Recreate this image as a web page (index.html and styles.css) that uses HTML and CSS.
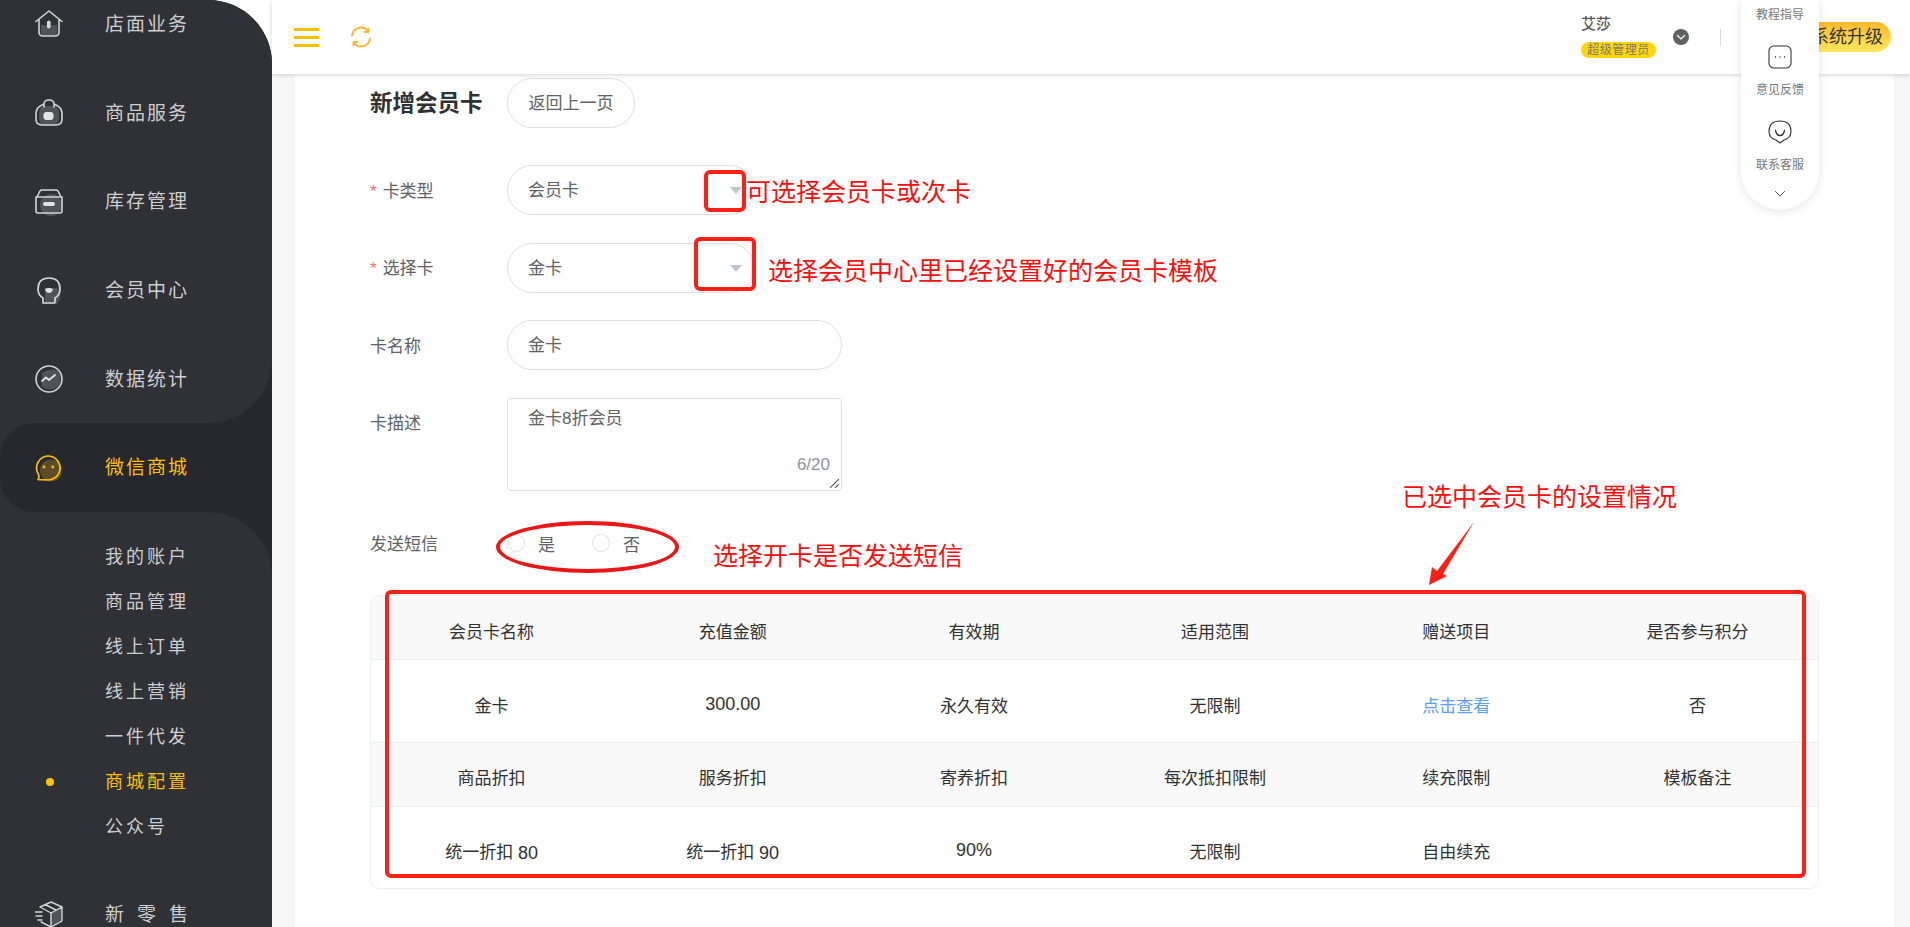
FILE: index.html
```html
<!DOCTYPE html>
<html lang="zh-CN">
  <head>
    <meta charset="UTF-8">
    <title>新增会员卡</title>
    <link rel="stylesheet" href="styles.css">
  </head>
  <body>
    <div class="app">
      <!-- Sidebar -->
      <aside class="sidebar">
        <div class="nav-top">
          <div class="nav-item nav-first">
            <svg class="nav-icon" viewBox="0 0 28 28" fill="none"><path d="M6 15h16v8q0 3-3 3H9q-3 0-3-3z" fill="#50535a"/><path d="M1 11.500 14 1l13 10.500M4 9.500V22q0 4 4 4h12q4 0 4-4V9.500" stroke="#d3d4d6" stroke-width="1.600" stroke-linecap="round" stroke-linejoin="round"/><rect x="12" y="10.500" width="3.600" height="8" rx="1.800" fill="#d9dadc"/></svg>
            <span>店面业务</span>
          </div>
          <div class="nav-item">
            <svg class="nav-icon" viewBox="0 0 28 28" fill="none"><rect x="4" y="7" width="20" height="19" rx="6" fill="#50535a"/><path d="M8 5.500Q1 8 1 15v5q0 6 6 6h14q6 0 6-6v-5q0-7-7-9.500M9 8V5q0-4 5-4t5 4v3" stroke="#d3d4d6" stroke-width="1.600" stroke-linecap="round"/><rect x="8.500" y="13" width="10" height="8" rx="3" fill="#e2e3e4"/></svg>
            <span>商品服务</span>
          </div>
          <div class="nav-item">
            <svg class="nav-icon" viewBox="0 0 28 28" fill="none"><circle cx="16" cy="17" r="11" fill="#50535a"/><path d="M2 9 5 3q.5-1 2-1h14q1.500 0 2 1l3 6H2zM1 9h26v14q0 2-2 2H3q-2 0-2-2z" stroke="#d3d4d6" stroke-width="1.600" stroke-linejoin="round"/><rect x="8" y="14" width="12" height="4" rx="2" fill="#e2e3e4"/></svg>
            <span>库存管理</span>
          </div>
          <div class="nav-item">
            <svg class="nav-icon" viewBox="0 0 28 28" fill="none"><path d="M10 11h12q5 3 3 10t-5 6H10z" fill="#50535a"/><path d="M8 26v-5Q3 18 3 12 3 1 14 1t11 11q0 6-5 9v4q0 1-1 1H8" stroke="#d3d4d6" stroke-width="1.700" stroke-linecap="round"/><path d="M10 12q4-2 8 0-1 4-4 4t-4-4" fill="#e2e3e4"/></svg>
            <span>会员中心</span>
          </div>
          <div class="nav-item">
            <svg class="nav-icon" viewBox="0 0 28 28" fill="none"><path d="M7 8q8-6 16-2 5 8 0 16-9 5-16 0z" fill="#50535a"/><circle cx="14" cy="14" r="13" stroke="#d3d4d6" stroke-width="1.600"/><path d="m7 16 4-3.500 3 2.500 6-5" stroke="#e2e3e4" stroke-width="1.800" stroke-linecap="round" stroke-linejoin="round"/></svg>
            <span>数据统计</span>
          </div>
        </div>
        <div class="nav-active-wrap">
          <div class="nav-item nav-active">
            <svg class="nav-icon" viewBox="0 0 28 28" fill="none"><circle cx="16" cy="16.500" r="11" fill="#5c4d2a"/><path d="M13 2a12 12 0 1 1-1.500 23.900C8 25.500 5 26 3 25.500 4 24 4 22 3.500 20.500A12 12 0 0 1 13 2z" stroke="#ffbf00" stroke-width="1.700" stroke-linejoin="round"/><circle cx="9" cy="13" r="1.400" fill="#ffbf00"/><circle cx="17.800" cy="13" r="1.400" fill="#ffbf00"/></svg>
            <span>微信商城</span>
          </div>
        </div>
        <div class="nav-bottom">
          <ul class="sub-nav">
            <li>我的账户</li>
            <li>商品管理</li>
            <li>线上订单</li>
            <li>线上营销</li>
            <li>一件代发</li>
            <li class="current">商城配置</li>
            <li>公众号</li>
          </ul>
          <div class="nav-item nav-wide">
            <svg class="nav-icon" viewBox="0 0 28 28" fill="none"><path d="M15 13 27 7v14l-12 6z" fill="#50535a"/><path d="m5 7 11-5 11 5v14l-11 6-10-5M5 7l11 6 11-6M16 13v14M10 4.500l11 5.500M0 12h7M1 16h6M3 20h4" stroke="#d3d4d6" stroke-width="1.400" stroke-linecap="round" stroke-linejoin="round"/></svg>
            <span>新零售</span>
          </div>
        </div>
      </aside>

      <div class="main">
        <!-- Top bar -->
        <header class="topbar">
          <div class="menu-btn"><i></i><i></i><i></i></div>
          <svg class="refresh" viewBox="0 0 22 22" fill="none" stroke="#fdb62f" stroke-width="2" stroke-linecap="round" stroke-linejoin="round"><path d="M2 9.500A9 9 0 0 1 18 5M20 12.500A9 9 0 0 1 4 17"/><path d="M14.500 6H18.500V2.500M7.500 16H3.500V19.500" stroke-width="1.800"/></svg>
          <div class="user">
            <div class="user-name">艾莎</div>
            <div class="user-role">超级管理员</div>
          </div>
          <div class="user-arrow">
            <svg viewBox="0 0 16 16" fill="none" stroke="#fff" stroke-width="1.200" stroke-linecap="round"><path d="m4.500 6.500 3.500 3.500 3.500-3.500"/></svg>
          </div>
          <div class="divider"></div>
          <div class="upgrade">系统升级</div>
        </header>

        <!-- Form card -->
        <div class="content">
          <div class="card">
            <div class="page-title">
              <h1>新增会员卡</h1>
              <div class="back-btn">返回上一页</div>
            </div>

            <div class="form-row">
              <label class="required">卡类型</label>
              <div class="field field-select">会员卡<b class="caret"></b></div>
            </div>
            <div class="form-row">
              <label class="required">选择卡</label>
              <div class="field field-select">金卡<b class="caret"></b></div>
            </div>
            <div class="form-row">
              <label>卡名称</label>
              <div class="field">金卡</div>
            </div>
            <div class="form-row form-row-area">
              <label>卡描述</label>
              <div class="area">
                金卡8折会员
                <span class="counter">6/20</span>
                <svg class="grip" viewBox="0 0 10 10" stroke="#555" stroke-width="1"><path d="M1 9 9 1M5.500 9 9 5.500"/></svg>
              </div>
            </div>
            <div class="form-row form-row-radio">
              <label>发送短信</label>
              <div class="radio"><i></i>是</div>
              <div class="radio"><i></i>否</div>
            </div>

            <table class="info-table">
              <tr class="row-head row-first">
                <td>会员卡名称</td><td>充值金额</td><td>有效期</td><td>适用范围</td><td>赠送项目</td><td>是否参与积分</td>
              </tr>
              <tr class="row-value">
                <td>金卡</td><td><span class="num">300.00</span></td><td>永久有效</td><td>无限制</td><td class="link">点击查看</td><td>否</td>
              </tr>
              <tr class="row-head">
                <td>商品折扣</td><td>服务折扣</td><td>寄养折扣</td><td>每次抵扣限制</td><td>续充限制</td><td>模板备注</td>
              </tr>
              <tr class="row-value row-last">
                <td>统一折扣 <span class="num">80</span></td><td>统一折扣 <span class="num">90</span></td><td><span class="num">90%</span></td><td>无限制</td><td>自由续充</td><td></td>
              </tr>
            </table>
          </div>
        </div>
      </div>

      <!-- Floating help panel -->
      <div class="help-panel">
        <div class="help-text help-clipped">教程指导</div>
        <svg class="help-icon" viewBox="0 0 24 24" fill="none" stroke="#333" stroke-width="1.100"><rect x="1" y="1" width="22" height="22" rx="5"/><path d="M7 12h1M11.500 12h1M16 12h1" stroke-width="1.400"/></svg>
        <div class="help-text">意见反馈</div>
        <svg class="help-icon" viewBox="0 0 24 24" fill="none" stroke="#333" stroke-width="1.100" stroke-linecap="round" stroke-linejoin="round"><path d="M12 23 8 20Q1 18 1 11.500 1 1 12 1t11 10.500Q23 18 16 20z"/><path d="M7.500 10.500q1 5 4.500 5t4.500-5" stroke-width="1.300"/></svg>
        <div class="help-text">联系客服</div>
        <svg class="help-more" viewBox="0 0 12 7" fill="none" stroke="#555" stroke-width=".9"><path d="m1 1 5 5 5-5"/></svg>
      </div>

      <!-- Red markup drawn over the screenshot -->
      <div class="mark mark-box1"></div>
      <div class="mark mark-box2"></div>
      <div class="mark mark-ellipse"></div>
      <div class="mark mark-table"></div>
      <svg class="mark-arrow" viewBox="0 0 50 70"><path d="M45 0 14 52 18 54 0 63 3 45 8 49z" fill="#ff2015"/></svg>
      <div class="note note-1">可选择会员卡或次卡</div>
      <div class="note note-2">选择会员中心里已经设置好的会员卡模板</div>
      <div class="note note-3">选择开卡是否发送短信</div>
      <div class="note note-4">已选中会员卡的设置情况</div>
    </div>
  </body>
</html>
```

FILE: styles.css
```css
/* Reset */
* {
  margin: 0;
  padding: 0;
  box-sizing: border-box;
}

html, body {
  height: 100%;
  overflow: hidden;
}

body {
  font-family: "Liberation Sans", "Noto Sans CJK SC", sans-serif;
  font-size: 17px;
  color: #606266;
}

.app {
  position: relative;
  display: flex;
  height: 927px;
  background: #fff;
  overflow: hidden;
}

/* Sidebar */
.sidebar {
  flex: 0 0 272px;
  display: flex;
  flex-direction: column;
  background: #27282d;
  border-top-right-radius: 64px;
  overflow: hidden;
  position: relative;
  z-index: 3;
  color: #cdced0;
}

.nav-top {
  height: 423px;
  background: #303136;
  border-bottom-right-radius: 64px;
}

.nav-item {
  display: flex;
  align-items: center;
  height: 88.75px;
  padding-left: 35px;
  font-size: 19px;
  letter-spacing: 2px;
}

.nav-item span {
  margin-bottom: 4px;
}

.nav-first {
  margin-top: -20px;
}

.nav-icon {
  flex: none;
  width: 28px;
  height: 28px;
  margin-right: 42px;
}

.nav-active-wrap {
  height: 89px;
  background: #303136;
}

.nav-active {
  height: 89px;
  background: #27282d;
  border-radius: 34px 0 0 34px;
  color: #ffbf00;
}

.nav-bottom {
  flex: 1;
  background: #303136;
  border-top-right-radius: 64px;
  padding-top: 23px;
}

.sub-nav {
  list-style: none;
  margin-bottom: 20px;
}

.sub-nav li {
  position: relative;
  height: 45px;
  line-height: 45px;
  padding-left: 105px;
  font-size: 18px;
  letter-spacing: 3px;
}

.sub-nav .current {
  color: #ffbf00;
}

.sub-nav .current::before {
  content: "";
  position: absolute;
  left: 46px;
  top: 18px;
  width: 8px;
  height: 8px;
  border-radius: 50%;
  background: #ffc400;
}

.nav-wide {
  letter-spacing: 13px;
}

/* Main */
.main {
  flex: 1;
  min-width: 0;
  display: flex;
  flex-direction: column;
}

.topbar {
  flex: 0 0 74px;
  display: flex;
  align-items: center;
  padding-left: 22px;
  background: #fff;
  box-shadow: 0 1px 4px rgba(0, 0, 0, 0.18);
  position: relative;
  z-index: 2;
}

.menu-btn {
  width: 25px;
  height: 19px;
  display: flex;
  flex-direction: column;
  justify-content: space-between;
  margin-right: 31px;
}

.menu-btn i {
  display: block;
  height: 3px;
  background: #ffbf00;
}

.refresh {
  width: 22px;
  height: 22px;
  margin-right: auto;
}

.user {
  width: 92px;
  margin-top: -3px;
}

.user-name {
  font-size: 15px;
  line-height: 20px;
  font-weight: 500;
  color: #555;
}

.user-role {
  display: block;
  width: 75px;
  height: 16px;
  margin-top: 8px;
  line-height: 16px;
  text-align: center;
  font-size: 12px;
  letter-spacing: 0.5px;
  white-space: nowrap;
  color: #777;
  background: #ffd60a;
  border-radius: 8px;
}

.user-arrow {
  width: 16px;
  height: 16px;
  margin-right: 31px;
  border-radius: 50%;
  background: #5f6064;
}

.user-arrow svg {
  display: block;
}

.divider {
  width: 1px;
  height: 17px;
  background: #d9dbe3;
  margin-right: 72px;
}

.upgrade {
  width: 98px;
  height: 30px;
  margin-right: 19px;
  padding-left: 18px;
  line-height: 30px;
  font-size: 18px;
  white-space: nowrap;
  color: #333;
  background: linear-gradient(#fdb92b, #ffe75f);
  border-radius: 15px;
}

.content {
  flex: 1;
  background: #f6f6f6;
  padding: 0 16px 0 23px;
  overflow: hidden;
}

.card {
  height: 100%;
  background: #fff;
  padding: 4px 0 0 75px;
}

.page-title {
  display: flex;
  align-items: center;
  height: 50px;
  margin-bottom: 37px;
}

.page-title h1 {
  width: 137px;
  margin-top: -4px;
  font-size: 22.500px;
  font-weight: 700;
  color: #303133;
}

.back-btn {
  width: 128px;
  height: 50px;
  line-height: 50px;
  text-align: center;
  border: 1px solid #dcdfe6;
  border-radius: 25px;
}

/* Form */
.form-row {
  display: flex;
  align-items: center;
  height: 50px;
  margin-bottom: 27.600px;
}

.form-row label {
  flex: 0 0 137px;
  margin-top: -2px;
}

.required::before {
  content: "*";
  margin-right: 6px;
  color: #f56c6c;
}

.field {
  position: relative;
  width: 335px;
  height: 50px;
  padding-left: 20px;
  line-height: 49px;
  border: 1px solid #dcdfe6;
  border-radius: 25px;
}

.field-select {
  width: 248px;
}

.caret {
  position: absolute;
  right: 12px;
  top: 21px;
  border: 6px solid transparent;
  border-top: 7px solid #c0c4cc;
  border-bottom: 0;
}

.form-row-area {
  align-items: flex-start;
  height: 93px;
  margin-bottom: 40.500px;
}

.form-row-area label {
  margin-top: 0;
  line-height: 51px;
}

.area {
  position: relative;
  width: 335px;
  height: 93px;
  padding: 2px 20px;
  line-height: 35px;
  border: 1px solid #dcdfe6;
  border-radius: 4px;
}

.counter {
  position: absolute;
  right: 11px;
  bottom: 15px;
  line-height: 20px;
  font-size: 17px;
  color: #909399;
}

.grip {
  position: absolute;
  right: 1px;
  bottom: 1px;
  width: 11px;
  height: 11px;
}

.form-row-radio {
  height: 24px;
  margin-bottom: 40px;
}

.radio {
  display: flex;
  align-items: center;
  width: 85px;
}

.radio i {
  width: 18px;
  height: 18px;
  margin-right: 13px;
  border: 1px solid #dcdfe6;
  border-radius: 50%;
}

/* Member card table */
.info-table {
  width: 1449px;
  table-layout: fixed;
  border-collapse: separate;
  border-spacing: 0;
  border: 1px solid #ebeef5;
  border-radius: 10px;
  overflow: hidden;
  color: #303133;
  text-align: center;
}

.info-table td {
  padding-top: 6px;
  border-top: 1px solid #ebeef5;
}

.info-table .row-first td {
  border-top: 0;
  padding-top: 5px;
}

.info-table .row-head:not(.row-first) td {
  padding-top: 3px;
}

.row-head {
  height: 64px;
  background: #f9f9f9;
}

.row-first {
  height: 63px;
}

.row-value {
  height: 83px;
  background: #fff;
}

.row-last {
  height: 82px;
}

.num {
  font-size: 18px;
  vertical-align: -1px;
}

.info-table .link {
  color: #5b9dff;
}

/* Help panel */
.help-panel {
  position: absolute;
  top: 0;
  left: 1741px;
  width: 78px;
  height: 210px;
  display: flex;
  flex-direction: column;
  align-items: center;
  background: #fff;
  border-radius: 0 0 39px 39px;
  box-shadow: 0 2px 10px rgba(0, 0, 0, 0.1);
  z-index: 4;
}

.help-text {
  height: 18px;
  line-height: 18px;
  font-size: 12px;
  color: #777;
  margin-bottom: 21px;
}

.help-clipped {
  margin-top: 6px;
}

.help-icon {
  width: 24px;
  height: 24px;
  margin-bottom: 12px;
}

.help-more {
  width: 12px;
  height: 7px;
  margin-top: -5px;
}

/* Red markup */
.mark {
  position: absolute;
  z-index: 5;
  border: 4px solid #ff2015;
  border-radius: 6px;
}

.mark-box1 {
  left: 704px;
  top: 170px;
  width: 42px;
  height: 42px;
}

.mark-box2 {
  left: 694px;
  top: 237px;
  width: 62px;
  height: 54px;
}

.mark-ellipse {
  left: 496px;
  top: 521px;
  width: 183px;
  height: 52px;
  border-radius: 50%;
  border-color: #ea1717;
}

.mark-table {
  left: 385px;
  top: 590px;
  width: 1421px;
  height: 288px;
}

.mark-arrow {
  position: absolute;
  left: 1429px;
  top: 522px;
  width: 50px;
  height: 70px;
  z-index: 5;
}

.note {
  position: absolute;
  z-index: 5;
  line-height: 34px;
  font-size: 25px;
  white-space: nowrap;
  color: #ff0d0d;
}

.note-1 {
  left: 746px;
  top: 175px;
}

.note-2 {
  left: 768px;
  top: 254px;
}

.note-3 {
  left: 713px;
  top: 539px;
}

.note-4 {
  left: 1402px;
  top: 480px;
}
```
